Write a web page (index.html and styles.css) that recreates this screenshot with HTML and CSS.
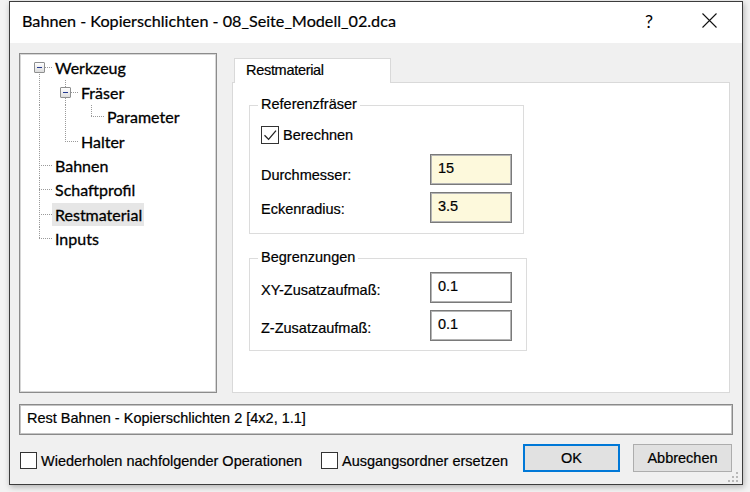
FILE: index.html
```html
<!DOCTYPE html>
<html lang="de">
<head>
<meta charset="utf-8">
<title>Bahnen - Kopierschlichten</title>
<link rel="stylesheet" href="styles.css">
</head>
<body>
<div class="window">
  <div class="titlebar">
    <span class="title">Bahnen - Kopierschlichten - 08_Seite_Modell_02.dca</span>
    <span class="help">?</span>
    <span class="close"><svg width="15" height="15" viewBox="0 0 15 15"><path d="M0.5 0.5L14.5 14.5M14.5 0.5L0.5 14.5" stroke="#111" stroke-width="1.1" fill="none"/></svg></span>
  </div>
  <div class="client">
    <div class="main">
      <div class="tree">
        <div class="node"><span class="cn cn-first"><i class="exp"></i></span><span class="txt">Werkzeug</span></div>
        <div class="node"><span class="gd"></span><span class="cn cn-mid"><i class="exp"></i></span><span class="txt">Fräser</span></div>
        <div class="node"><span class="gd"></span><span class="gd"></span><span class="cn cn-last"></span><span class="txt">Parameter</span></div>
        <div class="node"><span class="gd"></span><span class="cn cn-last"></span><span class="txt">Halter</span></div>
        <div class="node"><span class="cn cn-mid"></span><span class="txt">Bahnen</span></div>
        <div class="node"><span class="cn cn-mid"></span><span class="txt">Schaftprofil</span></div>
        <div class="node sel"><span class="cn cn-mid"></span><span class="txt">Restmaterial</span></div>
        <div class="node"><span class="cn cn-last"></span><span class="txt">Inputs</span></div>
      </div>
      <div class="tabs">
        <div class="tabstrip"><div class="tab">Restmaterial</div></div>
        <div class="panel">
          <div class="group g1">
            <div class="legend">Referenzfräser</div>
            <div class="check-row">
              <span class="cb cb-lg"><svg width="16" height="16" viewBox="0 0 16 16"><path d="M2.5 8.2L6.6 12.4L14 3.6" stroke="#222" stroke-width="1.3" fill="none"/></svg></span>
              <span class="cb-text">Berechnen</span>
            </div>
            <div class="frow first">
              <span class="lbl l-durch">Durchmesser:</span>
              <span class="input yellow">15</span>
            </div>
            <div class="frow">
              <span class="lbl l-ecken">Eckenradius:</span>
              <span class="input yellow">3.5</span>
            </div>
          </div>
          <div class="group g2">
            <div class="legend">Begrenzungen</div>
            <div class="frow first">
              <span class="lbl l-xy">XY-Zusatzaufmaß:</span>
              <span class="input">0.1</span>
            </div>
            <div class="frow">
              <span class="lbl l-xy">Z-Zusatzaufmaß:</span>
              <span class="input">0.1</span>
            </div>
          </div>
        </div>
      </div>
    </div>
    <div class="status">Rest Bahnen - Kopierschlichten 2 [4x2, 1.1]</div>
    <div class="actions">
      <div class="opt opt1"><span class="cb"></span><span class="cb-text">Wiederholen nachfolgender Operationen</span></div>
      <div class="opt opt2"><span class="cb"></span><span class="cb-text">Ausgangsordner ersetzen</span></div>
      <div class="btn ok">OK</div>
      <div class="btn cancel">Abbrechen</div>
    </div>
  </div>
  <svg class="grip" width="12" height="12" viewBox="0 0 12 12">
    <rect x="9" y="1" width="2" height="2" fill="#b8b8b8"/>
    <rect x="5" y="5" width="2" height="2" fill="#b8b8b8"/>
    <rect x="9" y="5" width="2" height="2" fill="#b8b8b8"/>
    <rect x="1" y="9" width="2" height="2" fill="#b8b8b8"/>
    <rect x="5" y="9" width="2" height="2" fill="#b8b8b8"/>
    <rect x="9" y="9" width="2" height="2" fill="#b8b8b8"/>
  </svg>
</div>
</body>
</html>
```

FILE: styles.css
```css
html, body {
  margin: 0;
  padding: 0;
}

body {
  width: 750px;
  height: 492px;
  overflow: hidden;
  background: #f3f3f3;
  font-family: "Liberation Sans", Arial, sans-serif;
  font-size: 14.5px;
  color: #000;
  -webkit-text-stroke: 0.2px #000;
}

.window {
  position: relative;
  box-sizing: border-box;
  width: 734px;
  height: 484px;
  margin: 1px 0 0 9px;
  border: 1px solid #3c3c3c;
  background: #f0f0f0;
  box-shadow: 1px 2px 6px rgba(0, 0, 0, 0.28);
  display: flex;
  flex-direction: column;
}

/* title bar */
.titlebar {
  flex: none;
  height: 41px;
  box-sizing: border-box;
  padding-bottom: 4px;
  background: #fff;
  display: flex;
  align-items: center;
  font-family: Lato, "Open Sans", sans-serif;
  font-size: 16.2px;
}

.title {
  flex: 1;
  padding-left: 12px;
}

.help {
  width: 10px;
  text-align: center;
  margin-right: 48px;
  font-size: 18px;
  -webkit-text-stroke: 0;
}

.close {
  display: flex;
  margin-right: 25px;
}

/* client area */
.client {
  flex: 1;
  padding: 10px 10px 0 9px;
  display: flex;
  flex-direction: column;
}

.main {
  display: flex;
  gap: 15px;
  height: 340px;
}

/* tree */
.tree {
  box-sizing: border-box;
  width: 198px;
  height: 340px;
  border: 1px solid #8c8c8c;
  box-shadow: inset 0 0 0 1px #d6d6d6;
  background: #fff;
  padding: 1.8px 0 0 6px;
  font-family: Lato, "Open Sans", sans-serif;
  font-size: 16px;
  -webkit-text-stroke: 0.3px #000;
}

.node {
  display: flex;
  align-items: center;
  height: 24.4px;
}

.gd, .cn {
  flex: none;
  width: 26px;
  height: 100%;
  display: flex;
  align-items: center;
}

.gd {
  background: repeating-linear-gradient(to bottom, #9a9a9a 0 1px, transparent 1px 2px) 13px 0 / 1px 100% no-repeat;
}

.cn-mid {
  background:
    repeating-linear-gradient(to bottom, #9a9a9a 0 1px, transparent 1px 2px) 13px 0 / 1px 100% no-repeat,
    repeating-linear-gradient(to right, #9a9a9a 0 1px, transparent 1px 2px) 13px 50% / 13px 1px no-repeat;
}

.cn-last {
  background:
    repeating-linear-gradient(to bottom, #9a9a9a 0 1px, transparent 1px 2px) 13px 0 / 1px 50% no-repeat,
    repeating-linear-gradient(to right, #9a9a9a 0 1px, transparent 1px 2px) 13px 50% / 13px 1px no-repeat;
}

.cn-first {
  background:
    repeating-linear-gradient(to bottom, #9a9a9a 0 1px, transparent 1px 2px) 13px 100% / 1px 50% no-repeat,
    repeating-linear-gradient(to right, #9a9a9a 0 1px, transparent 1px 2px) 13px 50% / 13px 1px no-repeat;
}

.exp {
  box-sizing: border-box;
  width: 11px;
  height: 11px;
  margin-left: 8px;
  border: 1px solid #8e8f8f;
  border-radius: 1px;
  background: linear-gradient(#ffffff, #dcdcdc);
  display: flex;
  align-items: center;
  justify-content: center;
}

.exp::after {
  content: "";
  width: 5px;
  height: 1px;
  background: #24398f;
}

.txt {
  padding: 0 2px 0 3px;
  line-height: 23px;
  white-space: nowrap;
}

.sel .txt {
  background: #e6e6e6;
}

/* tabs */
.tabs {
  width: 498px;
  margin-top: 5px;
  display: flex;
  flex-direction: column;
}

.tabstrip {
  height: 24px;
  padding-left: 2px;
  display: flex;
}

.tab {
  position: relative;
  z-index: 1;
  box-sizing: border-box;
  width: 157px;
  height: 25px;
  border: 1px solid #d9d9d9;
  border-bottom: none;
  background: #fff;
  padding-left: 11px;
  line-height: 23px;
  letter-spacing: -0.3px;
}

.panel {
  flex: 1;
  border: 1px solid #d9d9d9;
  background: #fff;
  padding: 22px 0 0 16px;
}

/* group boxes */
.group {
  box-sizing: border-box;
  width: 275px;
  border: 1px solid #dcdcdc;
  padding: 0 0 10px 11px;
}

.g2 {
  width: 278px;
  margin-top: 24px;
  padding-bottom: 9px;
}

.legend {
  width: max-content;
  height: 17px;
  line-height: 17px;
  margin: -10px 0 0 -3px;
  padding: 0 3px;
  background: #fff;
}

.check-row {
  display: flex;
  align-items: center;
  height: 18px;
  margin-top: 13px;
}

.cb {
  box-sizing: border-box;
  flex: none;
  width: 17px;
  height: 17px;
  border: 1px solid #333;
  background: #fff;
  display: flex;
  align-items: center;
  justify-content: center;
}

.cb-lg {
  width: 18px;
  height: 18px;
}

.cb-text {
  margin-left: 4px;
  white-space: nowrap;
}

.frow {
  display: flex;
  height: 31px;
  margin-top: 7px;
}

.g1 .frow.first {
  margin-top: 10px;
}

.g2 .frow.first {
  margin-top: 6px;
}

.lbl {
  width: 169px;
  flex: none;
  line-height: 17px;
  height: 17px;
  white-space: nowrap;
}

.l-durch { margin-top: 12.5px; }
.l-ecken { margin-top: 8.5px; }
.l-xy { margin-top: 9.5px; }

.input {
  box-sizing: border-box;
  width: 82px;
  height: 31px;
  border: 1px solid #7a7a7a;
  box-shadow: inset 0 0 0 1px #b4b4b4;
  background: #fff;
  padding-left: 7px;
  line-height: 27px;
}

.input.yellow {
  background: #fdf9dc;
}

/* status line */
.status {
  box-sizing: border-box;
  margin-top: 11px;
  width: 714px;
  height: 31px;
  border: 1px solid #8a8a8a;
  box-shadow: inset 0 0 0 1px #c4c4c4;
  background: #fff;
  padding-left: 7px;
  line-height: 27px;
  white-space: nowrap;
}

/* bottom row */
.actions {
  display: flex;
  align-items: center;
  height: 28px;
  margin-top: 9px;
}

.opt {
  display: flex;
  align-items: center;
  align-self: flex-end;
  height: 17px;
  margin-bottom: 3px;
}

.opt1 {
  width: 301px;
  margin-left: 1px;
}

.opt2 {
  flex: 1;
}

.btn {
  box-sizing: border-box;
  height: 28px;
  background: #e1e1e1;
  border: 1px solid #adadad;
  text-align: center;
  line-height: 26px;
}

.ok {
  width: 97px;
  border: 2px solid #0078d7;
  line-height: 24px;
  margin-right: 13px;
}

.cancel {
  width: 99px;
}

.grip {
  position: absolute;
  right: 3px;
  bottom: 1px;
}
```
